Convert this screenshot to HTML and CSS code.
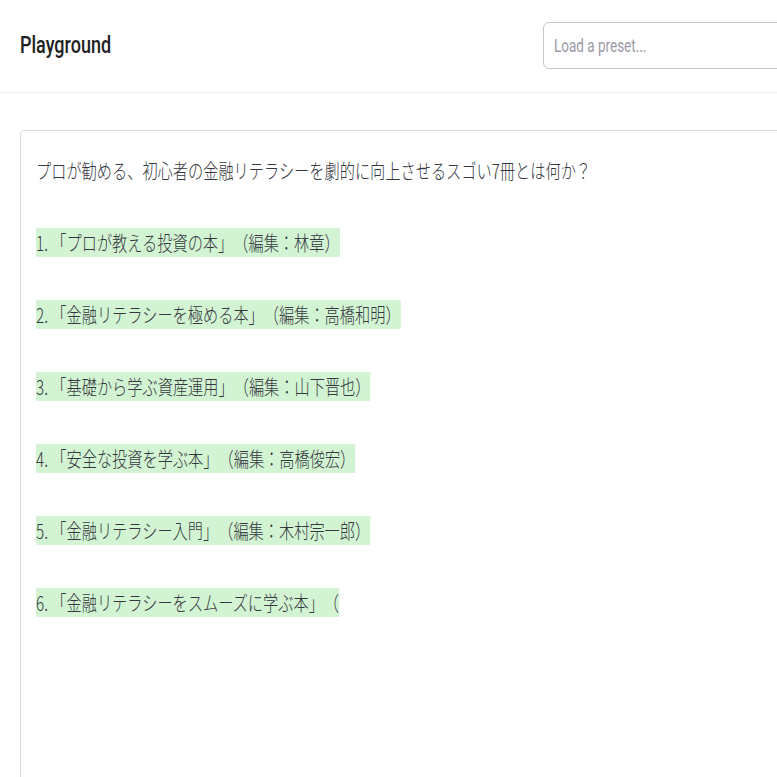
FILE: index.html
```html
<!DOCTYPE html>
<html>
<head>
  <title>Playground</title>
  <meta charset="UTF-8">
  <meta name="viewport" content="width=device-width, initial-scale=1.0">
  <link rel="stylesheet" href="styles.css">
</head>
<body>
  <nav class="topbar">
    <div class="brand">
      <h1 class="brand-title">Playground</h1>
    </div>
    <div class="preset">
      <span class="preset-placeholder">Load a preset...</span>
    </div>
  </nav>

  <main class="workspace">
    <div class="editor">
      <div class="completion">
        <p class="line">プロが勧める、初心者の金融リテラシーを劇的に向上させるスゴい7冊とは何か？</p>
        <p class="line"><span class="gen">1. 「プロが教える投資の本」（編集：林章）</span></p>
        <p class="line"><span class="gen">2. 「金融リテラシーを極める本」（編集：高橋和明）</span></p>
        <p class="line"><span class="gen">3. 「基礎から学ぶ資産運用」（編集：山下晋也）</span></p>
        <p class="line"><span class="gen">4. 「安全な投資を学ぶ本」（編集：高橋俊宏）</span></p>
        <p class="line"><span class="gen">5. 「金融リテラシー入門」（編集：木村宗一郎）</span></p>
        <p class="line"><span class="gen">6. 「金融リテラシーをスムーズに学ぶ本」（</span></p>
      </div>
    </div>
  </main>
</body>
</html>
```

FILE: styles.css
```css
body {
  margin: 0;
  overflow: hidden;
  background: #fff;
  font-family: Roboto, "Noto Sans", sans-serif;
}

.topbar {
  display: flex;
  align-items: center;
  height: 92px;
  padding-left: 20px;
  border-bottom: 1px solid #ececf1;
}

.brand {
  width: 523px;
  flex-shrink: 0;
  margin-top: -3px;
}

.brand-title {
  margin: 0;
  font-size: 24px;
  font-weight: 500;
  color: #202123;
  transform: scaleX(0.75);
  transform-origin: left center;
}

.preset {
  flex-shrink: 0;
  width: 400px;
  height: 45px;
  margin-top: -1px;
  display: flex;
  align-items: center;
  padding-left: 10px;
  border: 1px solid #c5c5d2;
  border-radius: 6px;
}

.preset-placeholder {
  display: inline-block;
  font-size: 18px;
  color: #9a9aa6;
  transform: scaleX(0.75);
  transform-origin: left center;
}

.workspace {
  padding: 37px 0 0 20px;
}

.editor {
  width: 900px;
  height: 700px;
  padding: 22px 15px;
  border: 1px solid #d9d9e3;
  border-radius: 4px;
}

.completion {
  width: 1100px;
  font-family: "Noto Sans CJK JP", sans-serif;
  font-size: 20px;
  font-weight: 300;
  line-height: 36px;
  color: #353740;
  text-spacing-trim: space-all;
  transform: scaleX(0.76);
  transform-origin: left top;
}

.line {
  margin: 0 0 36px;
  white-space: nowrap;
}

.gen {
  background-color: #d2f4d3;
}
```
